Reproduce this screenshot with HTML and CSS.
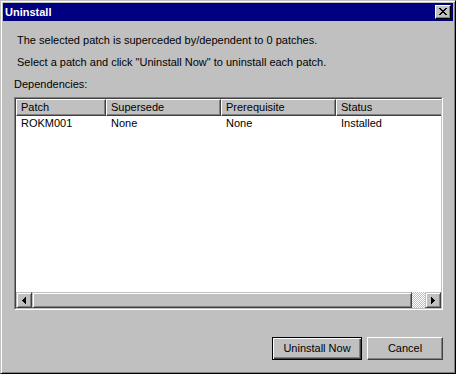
FILE: index.html
```html
<!DOCTYPE html>
<html>
<head>
<meta charset="utf-8">
<link rel="stylesheet" href="styles.css">
</head>
<body>
<div class="window">
  <div class="titlebar">
    <span class="title">Uninstall</span>
    <span class="close-btn">
      <svg width="8" height="7" viewBox="0 0 8 7"><path d="M0 0h2v1h1v1h2V1h1V0h2v1H7v1H6v1H5v1h1v1h1v1h1v1H6V6H5V5H3v1H2v1H0V6h1V5h1V4h1V3H2V2H1V1H0z" fill="#000"/></svg>
    </span>
  </div>
  <div class="content">
    <div class="msg indent">The selected patch is superceded by/dependent to 0 patches.</div>
    <div class="msg indent">Select a patch and click "Uninstall Now" to uninstall each patch.</div>
    <div class="msg label">Dependencies:</div>
    <div class="list">
      <div class="list-inner">
        <div class="header">
          <div class="hcell c1">Patch</div>
          <div class="hcell c2">Supersede</div>
          <div class="hcell c3">Prerequisite</div>
          <div class="hcell c4">Status</div>
        </div>
        <div class="body">
          <div class="row">
            <div class="cell c1">ROKM001</div>
            <div class="cell c2">None</div>
            <div class="cell c3">None</div>
            <div class="cell c4">Installed</div>
          </div>
        </div>
        <div class="hscroll">
          <div class="sbtn">
            <svg width="4" height="7" viewBox="0 0 4 7"><path d="M3 0h1v7H3V6H2V5H1V4H0V3h1V2h1V1h1z" fill="#000"/></svg>
          </div>
          <div class="thumb"></div>
          <div class="track"></div>
          <div class="sbtn">
            <svg width="4" height="7" viewBox="0 0 4 7"><path d="M0 0h1v1h1v1h1v1h1v1H3v1H2v1H1v1H0z" fill="#000"/></svg>
          </div>
        </div>
      </div>
    </div>
    <div class="buttons">
      <button class="btn default">Uninstall Now</button>
      <button class="btn cancel">Cancel</button>
    </div>
  </div>
</div>
</body>
</html>
```

FILE: styles.css
```css
html, body {
  margin: 0;
  padding: 0;
  background: #c0c0c0;
}

body {
  font-family: "Liberation Sans", Arial, sans-serif;
  font-size: 11px;
  color: #000;
}

.window {
  width: 456px;
  height: 374px;
  box-sizing: border-box;
  border: 1px solid;
  border-color: #c0c0c0 #000 #000 #c0c0c0;
  box-shadow: inset 1px 1px #fff, inset -1px -1px #808080;
  padding: 2px;
  background: #c0c0c0;
  display: flex;
  flex-direction: column;
}

.titlebar {
  height: 18px;
  background: #000080;
  display: flex;
  align-items: center;
  justify-content: space-between;
  padding: 0 2px 0 2px;
  flex: none;
}

.title {
  color: #fff;
  font-weight: bold;
  font-size: 11px;
  line-height: 13px;
}

.close-btn {
  width: 16px;
  height: 14px;
  box-sizing: border-box;
  background: #c0c0c0;
  border: 1px solid;
  border-color: #fff #000 #000 #fff;
  box-shadow: inset -1px -1px #808080;
  display: flex;
  align-items: center;
  justify-content: center;
  padding: 0 1px 1px 0;
}

.close-btn svg {
  display: block;
}

.content {
  flex: 1;
  display: flex;
  flex-direction: column;
  padding: 13px 10px 11px 11px;
  min-height: 0;
}

.msg {
  line-height: 13px;
  height: 13px;
  margin-bottom: 9px;
  white-space: nowrap;
}

.indent {
  margin-left: 3px;
}

.label {
  margin-bottom: 6px;
}

.list {
  width: 429px;
  height: 213px;
  box-sizing: border-box;
  border: 1px solid;
  border-color: #808080 #fff #fff #808080;
  flex: none;
}

.list-inner {
  height: 100%;
  box-sizing: border-box;
  border: 1px solid;
  border-color: #404040 #c0c0c0 #c0c0c0 #404040;
  background: #fff;
  display: flex;
  flex-direction: column;
  overflow: hidden;
}

.header {
  height: 17px;
  display: flex;
  flex: none;
  overflow: hidden;
  background: #c0c0c0;
}

.hcell {
  flex: none;
  height: 17px;
  box-sizing: border-box;
  border: 1px solid;
  border-color: #fff #404040 #404040 #fff;
  box-shadow: inset -1px -1px #808080;
  padding-left: 4px;
  line-height: 14px;
  white-space: nowrap;
}

.c1 { width: 90px; }
.c2 { width: 115px; }
.c3 { width: 115px; }
.c4 { width: 115px; }

.body {
  flex: 1;
  background: #fff;
}

.row {
  display: flex;
  height: 14px;
  line-height: 14px;
}

.cell {
  flex: none;
  box-sizing: border-box;
  padding-left: 5px;
  white-space: nowrap;
}

.hscroll {
  height: 16px;
  display: flex;
  flex: none;
  background: #c0c0c0;
}

.sbtn, .thumb {
  height: 16px;
  box-sizing: border-box;
  border: 1px solid;
  border-color: #c0c0c0 #404040 #404040 #c0c0c0;
  box-shadow: inset 1px 1px #fff, inset -1px -1px #808080;
  background: #c0c0c0;
}

.sbtn {
  width: 16px;
  display: flex;
  align-items: center;
  justify-content: center;
  flex: none;
}

.sbtn svg {
  display: block;
}

.thumb {
  width: 380px;
  flex: none;
}

.track {
  width: 13px;
  flex: none;
  background: repeating-conic-gradient(#c0c0c0 0 25%, #fff 0 50%) 0 0 / 2px 2px;
}

.buttons {
  margin-top: auto;
  display: flex;
  justify-content: flex-end;
  gap: 5px;
}

.btn {
  font-family: "Liberation Sans", Arial, sans-serif;
  font-size: 11px;
  color: #000;
  height: 23px;
  box-sizing: border-box;
  background: #c0c0c0;
  padding: 0;
  margin: 0;
  line-height: 13px;
}

.default {
  width: 90px;
  border: 1px solid #000;
  box-shadow: inset 1px 1px #fff, inset -1px -1px #404040, inset -2px -2px #808080;
}

.cancel {
  width: 76px;
  border: 1px solid;
  border-color: #fff #404040 #404040 #fff;
  box-shadow: inset -1px -1px #808080;
}
```
